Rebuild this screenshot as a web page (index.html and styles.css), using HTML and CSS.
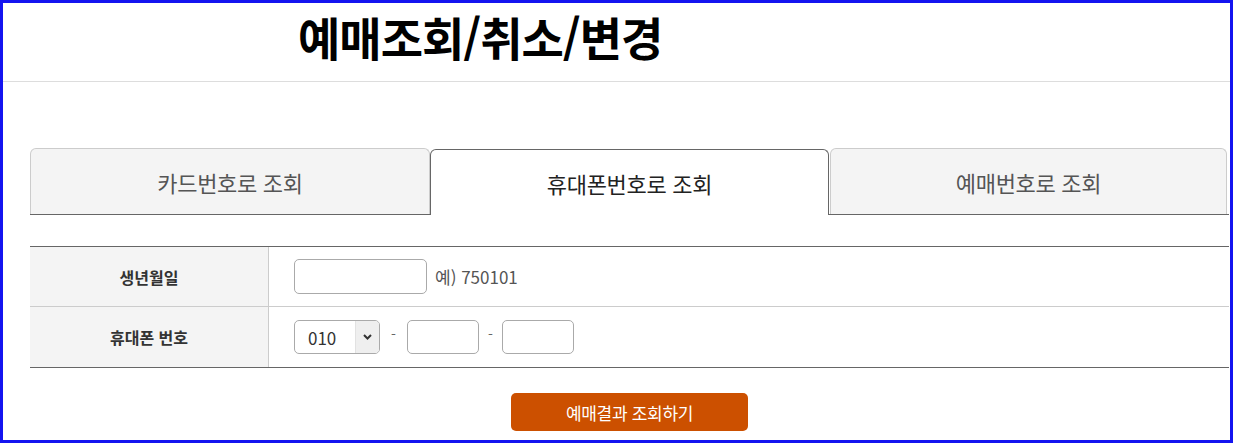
FILE: index.html
```html
<!DOCTYPE html>
<html lang="ko">
<head>
<meta charset="utf-8">
<title>예매조회/취소/변경</title>
<link rel="stylesheet" href="styles.css">
</head>
<body>
<div class="frame">
  <header class="header">
    <h1 class="title">예매조회/취소/변경</h1>
  </header>
  <main class="content">
    <div class="tabs">
      <div class="tab">카드번호로 조회</div>
      <div class="tab active">휴대폰번호로 조회</div>
      <div class="tab last">예매번호로 조회</div>
    </div>
    <div class="form">
      <div class="row">
        <div class="label">생년월일</div>
        <div class="field">
          <span class="input birth"></span>
          <span class="hint">예) 750101</span>
        </div>
      </div>
      <div class="row lastrow">
        <div class="label">휴대폰 번호</div>
        <div class="field">
          <span class="select"><span class="sel-val">010</span><span class="sel-arrow"><svg width="9" height="6" viewBox="0 0 9 6"><path d="M1 1 L4.5 4.5 L8 1" fill="none" stroke="#333" stroke-width="2"/></svg></span></span>
          <span class="dash first">-</span>
          <span class="input phone"></span>
          <span class="dash second">-</span>
          <span class="input phone"></span>
        </div>
      </div>
    </div>
    <div class="actions">
      <button class="btn" type="button">예매결과 조회하기</button>
    </div>
  </main>
</div>
</body>
</html>
```
FILE: styles.css
```css
* { box-sizing: border-box; }
html, body { margin: 0; padding: 0; background: #fff; }
body {
  font-family: "Noto Sans CJK KR", "Noto Sans", sans-serif;
  color: #333;
}
.frame {
  width: 1233px;
  height: 443px;
  border: 3px solid #1414f0;
  overflow: hidden;
}
.header {
  height: 79px;
  border-bottom: 1px solid #dddddd;
  padding-left: 295px;
}
.title {
  margin: 0;
  padding-top: 4px;
  font-size: 46px;
  line-height: 58px;
  font-weight: 700;
  color: #000;
  letter-spacing: -1px;
}
.content {
  padding: 66px 1px 0 27px;
}
.tabs {
  display: flex;
  height: 67px;
  border-bottom: 1px solid #666;
}
.tab {
  width: 400px;
  height: 66px;
  background: #f4f4f4;
  border: 1px solid #cccccc;
  border-bottom: none;
  border-radius: 6px 6px 0 0;
  display: flex;
  align-items: center;
  justify-content: center;
  font-size: 22px;
  color: #555;
  letter-spacing: -0.3px;
}
.tab.active {
  width: 399px;
  height: 66px;
  margin-top: 1px;
  background: #fff;
  border-color: #666;
  color: #222;
}
.tab.last { width: 397px; margin-left: 1px; }
.form {
  margin-top: 31px;
  border-top: 1px solid #666;
  border-bottom: 1px solid #666;
}
.row {
  display: flex;
  height: 60px;
  border-bottom: 1px solid #cccccc;
}
.row.lastrow { border-bottom: none; height: 60px; }
.label {
  width: 239px;
  background: #f4f4f4;
  border-right: 1px solid #cccccc;
  display: flex;
  align-items: center;
  justify-content: center;
  font-size: 16px;
  font-weight: 700;
  color: #333;
}
.field {
  display: flex;
  align-items: center;
  padding-left: 25px;
}
.input {
  display: inline-block;
  border: 1px solid #aaaaaa;
  border-radius: 5px;
  background: #fff;
}
.input.birth { width: 133px; height: 35px; }
.hint {
  margin-left: 8px;
  font-size: 17px;
  color: #555;
}
.select {
  display: flex;
  width: 86px;
  height: 34px;
  border: 1px solid #aaaaaa;
  border-radius: 5px;
  overflow: hidden;
}
.sel-val {
  flex: 1;
  display: flex;
  align-items: center;
  padding-left: 13px;
  font-size: 17px;
  color: #333;
}
.sel-arrow {
  width: 24px;
  background: #efefef;
  border-left: 1px solid #e2e2e2;
  display: flex;
  align-items: center;
  justify-content: center;
}
.dash {
  text-align: center;
  font-size: 14px;
  color: #666;
  margin-top: -6px;
}
.dash.first { width: 27px; }
.dash.second { width: 23px; }
.input.phone { width: 72px; height: 34px; }
.actions {
  display: flex;
  justify-content: center;
  padding-top: 25px;
}
.btn {
  width: 237px;
  height: 38px;
  border: none;
  border-radius: 5px;
  background: #cc5000;
  color: #fff;
  font-family: "Noto Sans CJK KR", "Noto Sans", sans-serif;
  font-size: 17px;
  letter-spacing: -0.3px;
  cursor: pointer;
}
```
